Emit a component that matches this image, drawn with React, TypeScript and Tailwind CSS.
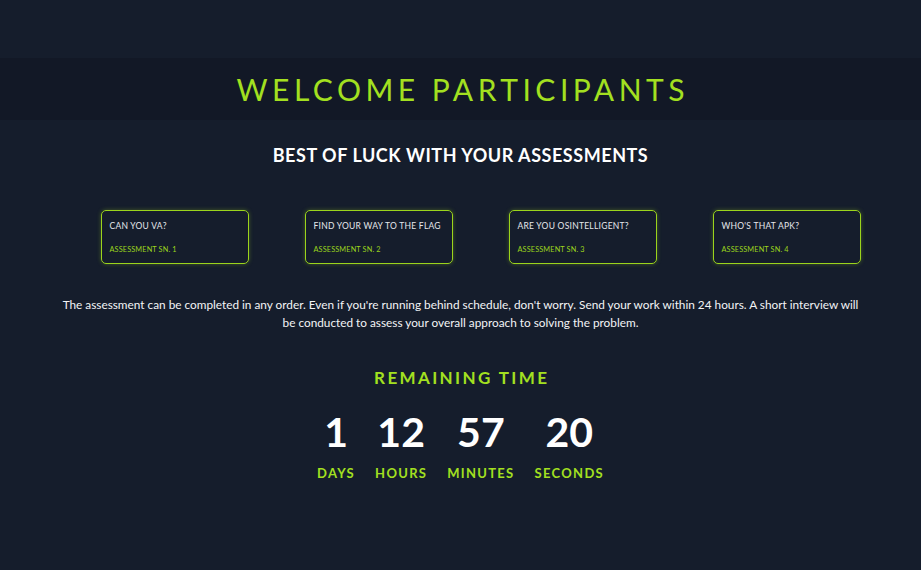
const assessments = [
  { title: "Can you VA?", sn: 1 },
  { title: "Find your way to the flag", sn: 2 },
  { title: "Are you OSINTelligent?", sn: 3 },
  { title: "Who's that APK?", sn: 4 },
];

const time = [
  { value: "1", label: "Days" },
  { value: "12", label: "Hours" },
  { value: "57", label: "Minutes" },
  { value: "20", label: "Seconds" },
];

const App = () => {
  return (
    <div className="min-h-[570px] w-full bg-[#151d2c] font-['Lato',sans-serif] text-white flex flex-col items-center">
      <div className="mt-[58px] w-full h-[62px] bg-[#121826] flex items-center justify-center">
        <h1 className="text-[30px] font-normal tracking-[0.15em] text-[#a3e020] pl-[0.15em]">
          WELCOME PARTICIPANTS
        </h1>
      </div>
      <h2 className="mt-[22px] text-[18px] font-bold tracking-[0.03em] leading-[26px]">
        BEST OF LUCK WITH YOUR ASSESSMENTS
      </h2>
      <div className="mt-[42px] ml-[40px] flex gap-[56px]">
        {assessments.map((a) => (
          <div
            key={a.sn}
            className="w-[148px] h-[54px] border-[1.5px] border-[#9bd41c] rounded-[5px] shadow-[0_0_4px_rgba(155,212,28,0.35)] px-[8px] pt-[9px] flex flex-col"
          >
            <p className="text-[8.5px] uppercase tracking-[0.03em] text-gray-200 leading-[12px] whitespace-nowrap">
              {a.title}
            </p>
            <p className="mt-[13px] text-[7.3px] uppercase tracking-[0.02em] text-[#9bd41c] leading-[10px]">
              Assessment SN. {a.sn}
            </p>
          </div>
        ))}
      </div>
      <p className="mt-[32px] w-[800px] text-center text-[11.8px] leading-[18px] text-gray-100">
        The assessment can be completed in any order. Even if you're running behind schedule, don't worry. Send your work
        within 24 hours. A short interview will be conducted to assess your overall approach to solving the problem.
      </p>
      <h3 className="mt-[34px] text-[17px] font-bold tracking-[0.14em] pl-[0.14em] text-[#a3e020] leading-[24px]">
        REMAINING TIME
      </h3>
      <div className="mt-[20px] flex gap-[20px]">
        {time.map((t) => (
          <div key={t.label} className="flex flex-col items-center">
            <span className="text-[41px] font-bold leading-[44px]">{t.value}</span>
            <span className="mt-[10px] text-[13px] font-bold uppercase tracking-[0.1em] text-[#a3e020] leading-[18px]">
              {t.label}
            </span>
          </div>
        ))}
      </div>
    </div>
  );
};

export default App;
